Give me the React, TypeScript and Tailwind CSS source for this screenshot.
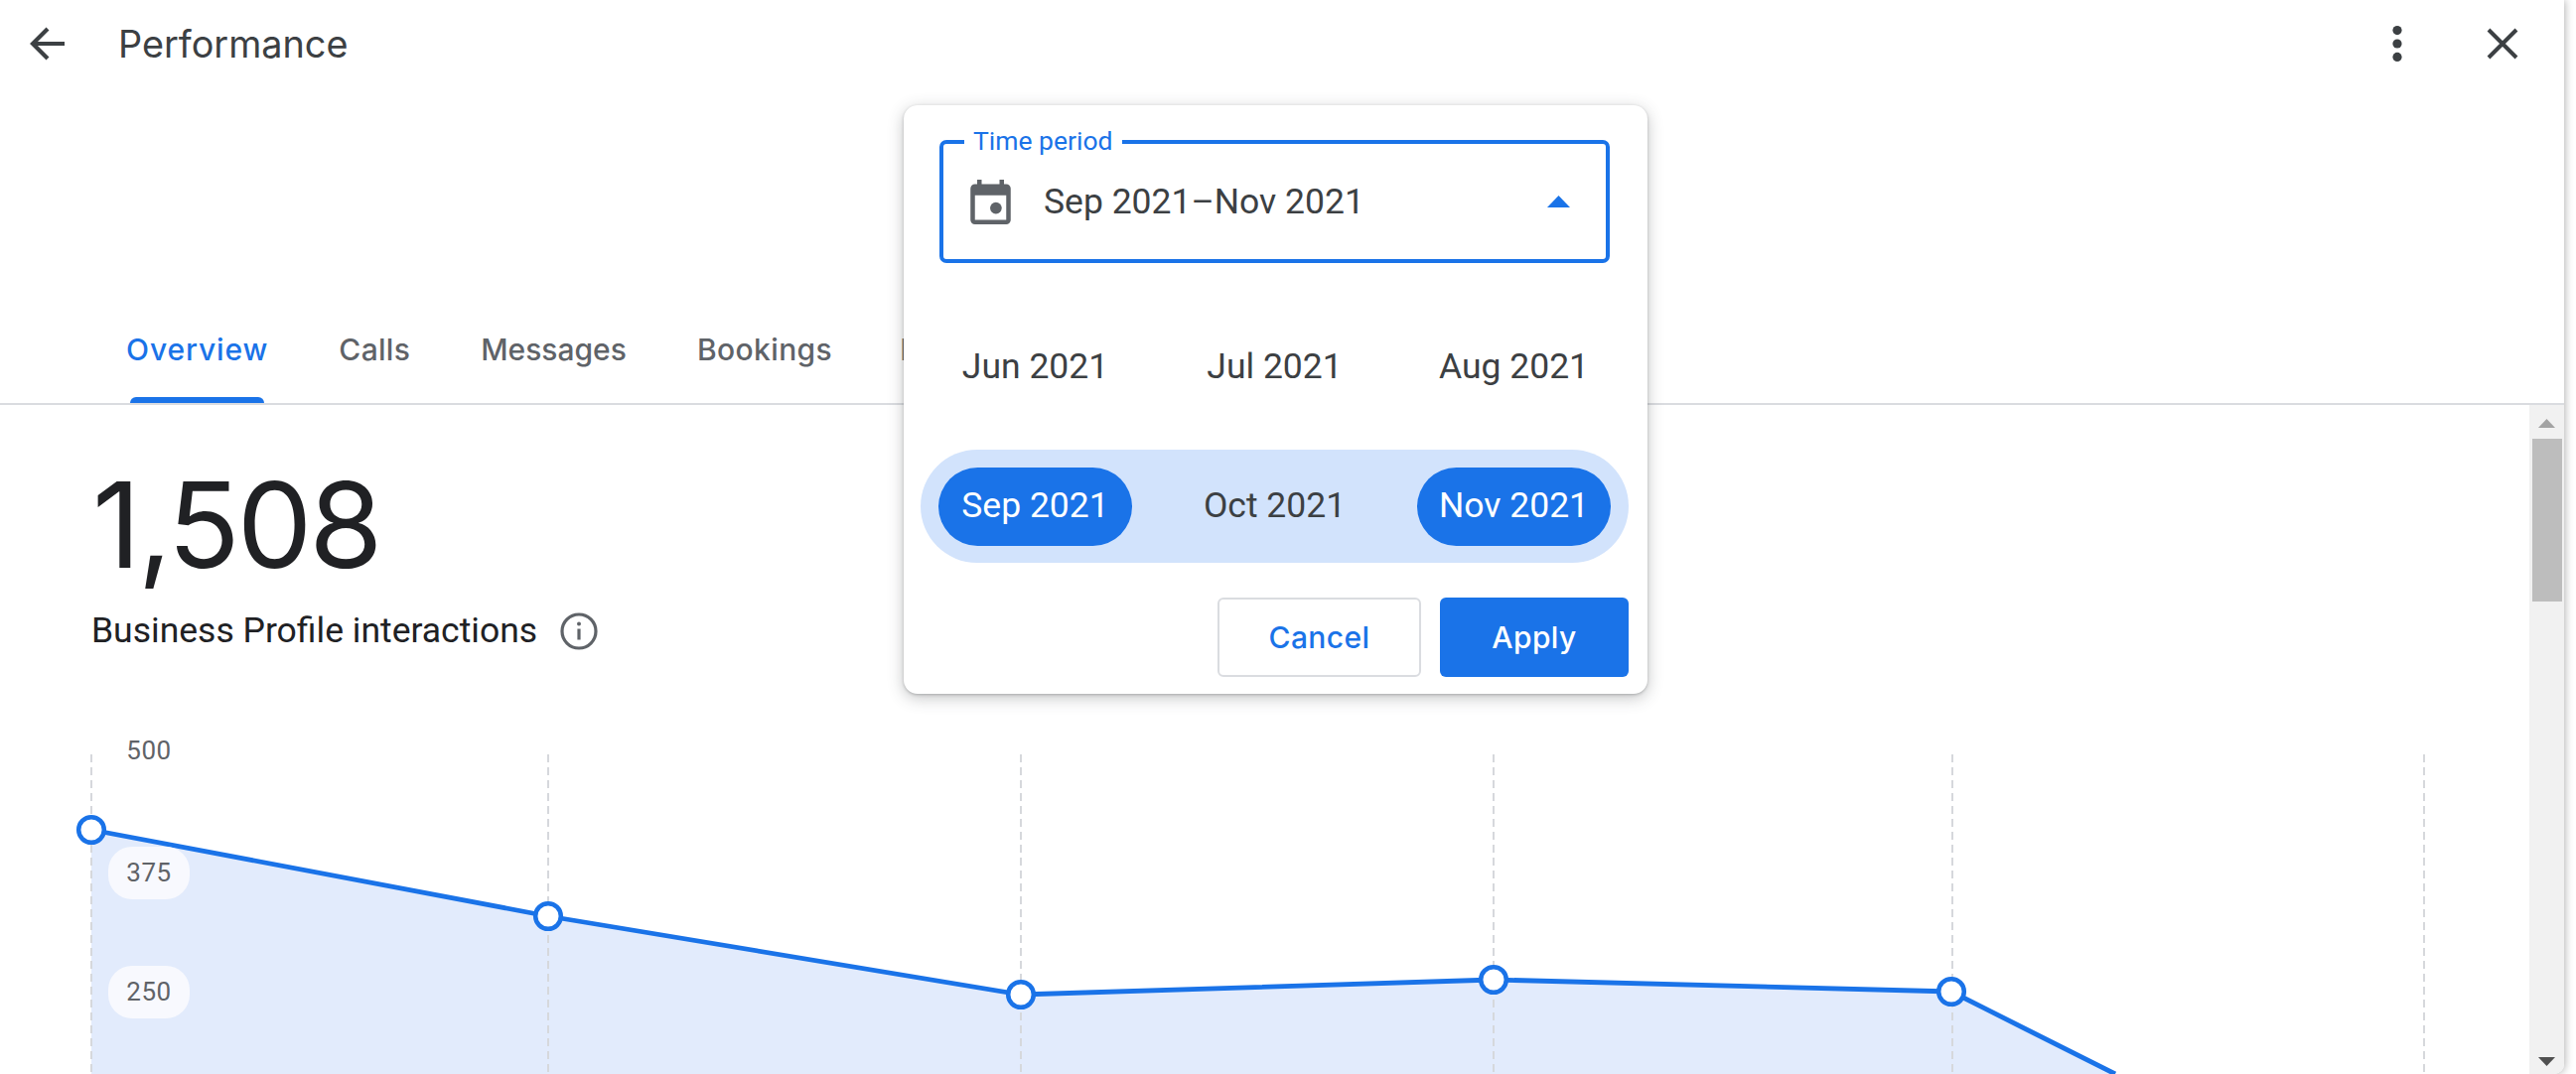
const ROBOTO = "font-['Roboto',sans-serif]"
const BLUE = '#1a73e8'

const gridXs = [92, 552, 1028, 1504, 1966, 2441]

// chart coordinates, y is relative to the top of the scroll area
const points: [number, number][] = [
  [92, 428],
  [552, 515],
  [1028, 594],
  [1504, 579],
  [1965, 591],
]

function Tab({ label, active, className }: { label: string; active?: boolean; className: string }) {
  return (
    <div className="relative flex h-[70px] items-center pb-[38px]">
      <span className={`font-['Inter',sans-serif] text-[30px] font-medium ${className} ${active ? 'text-[#1a73e8]' : 'text-[#5f6368]'}`}>{label}</span>
      {active && <div className="absolute bottom-0 left-[4px] right-[4px] h-[6px] rounded-t-[6px] bg-[#1a73e8]" />}
    </div>
  )
}

function Month({ label, selected }: { label: string; selected?: boolean }) {
  return (
    <div
      className={`flex h-[79px] w-[195px] items-center justify-center rounded-full text-[35.5px] ${ROBOTO} ${
        selected ? 'bg-[#1a73e8] text-white' : 'text-[#3c4043]'
      }`}
    >
      {label}
    </div>
  )
}

function Chart() {
  const line = points.map((p) => p.join(',')).join(' ') + ' 2130,674'
  return (
    <svg className="absolute left-0 top-0" width="2547" height="674">
      <polygon points={`92,674 ${line}`} fill="#e2ebfc" />
      {gridXs.map((x) => (
        <line key={x} x1={x} x2={x} y1={352} y2={674} stroke="#d6d8dc" strokeWidth="2" strokeDasharray="8 5" />
      ))}
      <polyline points={line} fill="none" stroke={BLUE} strokeWidth="4.8" />
      {points.map(([x, y]) => (
        <circle key={x} cx={x} cy={y} r="12.8" fill="white" stroke={BLUE} strokeWidth="4.5" />
      ))}
    </svg>
  )
}

function AxisLabel({ value, className }: { value: string; className: string }) {
  return (
    <div className={`absolute left-[109px] flex h-[53px] w-[82px] items-center justify-center rounded-[24px] bg-[#f8f9fe] text-[26px] tracking-[0.5px] text-[#5f6368] ${ROBOTO} ${className}`}>
      {value}
    </div>
  )
}

function Scrollbar() {
  return (
    <div className="flex w-[35px] shrink-0 flex-col items-center bg-[#f1f1f1]">
      <div className="flex h-[34px] items-start pt-[14px]">
        <svg width="17" height="9" viewBox="0 0 17 9"><path d="M8.5 0 17 9H0z" fill="#a3a3a3" /></svg>
      </div>
      <div className="h-[164px] w-[30px] bg-[#bdbdbd]" />
      <div className="flex-1" />
      <div className="flex h-[17px] items-start">
        <svg width="17" height="9" viewBox="0 0 17 9"><path d="M0 0h17L8.5 9z" fill="#505050" /></svg>
      </div>
    </div>
  )
}

function DatePopup() {
  return (
    <div className="absolute left-[910px] top-[106px] flex h-[593px] w-[749px] flex-col rounded-[14px] bg-white shadow-[0_4px_16px_rgba(60,64,67,0.3),0_1px_3px_rgba(60,64,67,0.3)]">
      <div className="relative ml-[36px] mr-[38px] mt-[35px] flex h-[124px] items-center rounded-[7px] border-[4px] border-[#1a73e8] pl-[27px] pr-[36px]">
        <span className={`absolute left-[21px] top-[-19px] bg-white px-[9px] text-[26.5px] leading-[32px] text-[#1a73e8] ${ROBOTO}`}>Time period</span>
        <svg className="mr-[33px] shrink-0" width="41" height="45" viewBox="3 2 18 20">
          <path fill="#5f6368" d="M19 4h-1V2h-2v2H8V2H6v2H5c-1.1 0-2 .9-2 2v14c0 1.1.9 2 2 2h14c1.1 0 2-.9 2-2V6c0-1.1-.9-2-2-2zm0 16H5V9h14v11z" />
          <circle cx="14.4" cy="14.7" r="2.6" fill="#5f6368" />
        </svg>
        <span className={`flex-1 text-[35.5px] leading-[46px] text-[#3c4043] ${ROBOTO}`}>Sep 2021–Nov 2021</span>
        <svg width="23" height="12" viewBox="0 0 23 12"><path d="M11.5 0 23 12H0z" fill="#1a73e8" /></svg>
      </div>
      <div className={`mt-[75px] flex h-[60px] items-center justify-between pl-[35px] pr-[37px] text-[35.5px] text-[#3c4043] ${ROBOTO}`}>
        <span className="w-[195px] text-center">Jun 2021</span>
        <span className="w-[195px] text-center">Jul 2021</span>
        <span className="w-[195px] text-center">Aug 2021</span>
      </div>
      <div className="ml-[17px] mr-[19px] mt-[53px] flex h-[114px] items-center justify-between rounded-full bg-[#d2e3fc] px-[18px]">
        <Month label="Sep 2021" selected />
        <Month label="Oct 2021" />
        <Month label="Nov 2021" selected />
      </div>
      <div className="mt-[35px] flex justify-end gap-[19px] pr-[19px] font-['Inter',sans-serif] text-[30px] font-medium tracking-[0.4px]">
        <button className="flex h-[80px] w-[205px] items-center justify-center rounded-[6px] border-2 border-[#dadce0] text-[#1a73e8]">Cancel</button>
        <button className="flex h-[80px] w-[190px] items-center justify-center rounded-[6px] bg-[#1a73e8] text-white">Apply</button>
      </div>
    </div>
  )
}

export default function App() {
  return (
    <div className="relative flex h-[1082px] w-[2594px] overflow-hidden bg-white">
      <div className="flex w-[2582px] shrink-0 flex-col overflow-hidden rounded-br-[10px] bg-white shadow-[1px_0_9px_rgba(0,0,0,0.3)]">
        <header className="flex h-[88px] items-center pl-[30px] pr-[46px]">
          <svg width="36" height="36" viewBox="0 0 36 36">
            <path d="M35 18H4M18 3 3 18 18 33" fill="none" stroke="#3c4043" strokeWidth="4.2" />
          </svg>
          <h1 className="ml-[53px] flex-1 font-['Inter',sans-serif] text-[37.8px] font-normal text-[#3c4043]">Performance</h1>
          <svg className="mr-[85px]" width="10" height="36" viewBox="0 0 10 36">
            <circle cx="5" cy="4.6" r="4.6" fill="#3c4043" />
            <circle cx="5" cy="18" r="4.6" fill="#3c4043" />
            <circle cx="5" cy="31.4" r="4.6" fill="#3c4043" />
          </svg>
          <svg width="32" height="32" viewBox="0 0 32 32">
            <path d="M2 2l28 28M30 2 2 30" fill="none" stroke="#3c4043" strokeWidth="4" />
          </svg>
        </header>
        <div className="mt-[248px] flex gap-[71px] border-b-2 border-[#dadce0] pl-[127px]">
          <Tab label="Overview" active className="tracking-[0.9px]" />
          <Tab label="Calls" className="tracking-[0.3px]" />
          <Tab label="Messages" className="tracking-[0px]" />
          <Tab label="Bookings" className="tracking-[0.4px]" />
          <Tab label="Directions" className="-ml-[3px] tracking-[0.4px]" />
        </div>
        <div className="flex min-h-0 flex-1">
          <main className="relative flex-1 overflow-hidden">
            <Chart />
            <AxisLabel value="500" className="top-[322px] bg-transparent" />
            <AxisLabel value="375" className="top-[445px]" />
            <AxisLabel value="250" className="top-[565px]" />
            <div className="relative pl-[93px] pt-[56px]">
              <div className="font-['Inter',sans-serif] text-[120px] leading-[130px] tracking-[-3px] text-[#202124]">1,508</div>
              <div className={`-ml-px mt-[15px] flex items-center gap-[23px] text-[35.5px] text-[#202124] ${ROBOTO}`}>
                Business Profile interactions
                <svg width="38" height="38" viewBox="0 0 38 38">
                  <circle cx="19" cy="19" r="17" fill="none" stroke="#5f6368" strokeWidth="3.2" />
                  <path d="M19 16.5v11" stroke="#5f6368" strokeWidth="3.2" />
                  <circle cx="19" cy="11.5" r="2" fill="#5f6368" />
                </svg>
              </div>
            </div>
          </main>
          <Scrollbar />
        </div>
      </div>
      <DatePopup />
    </div>
  )
}
